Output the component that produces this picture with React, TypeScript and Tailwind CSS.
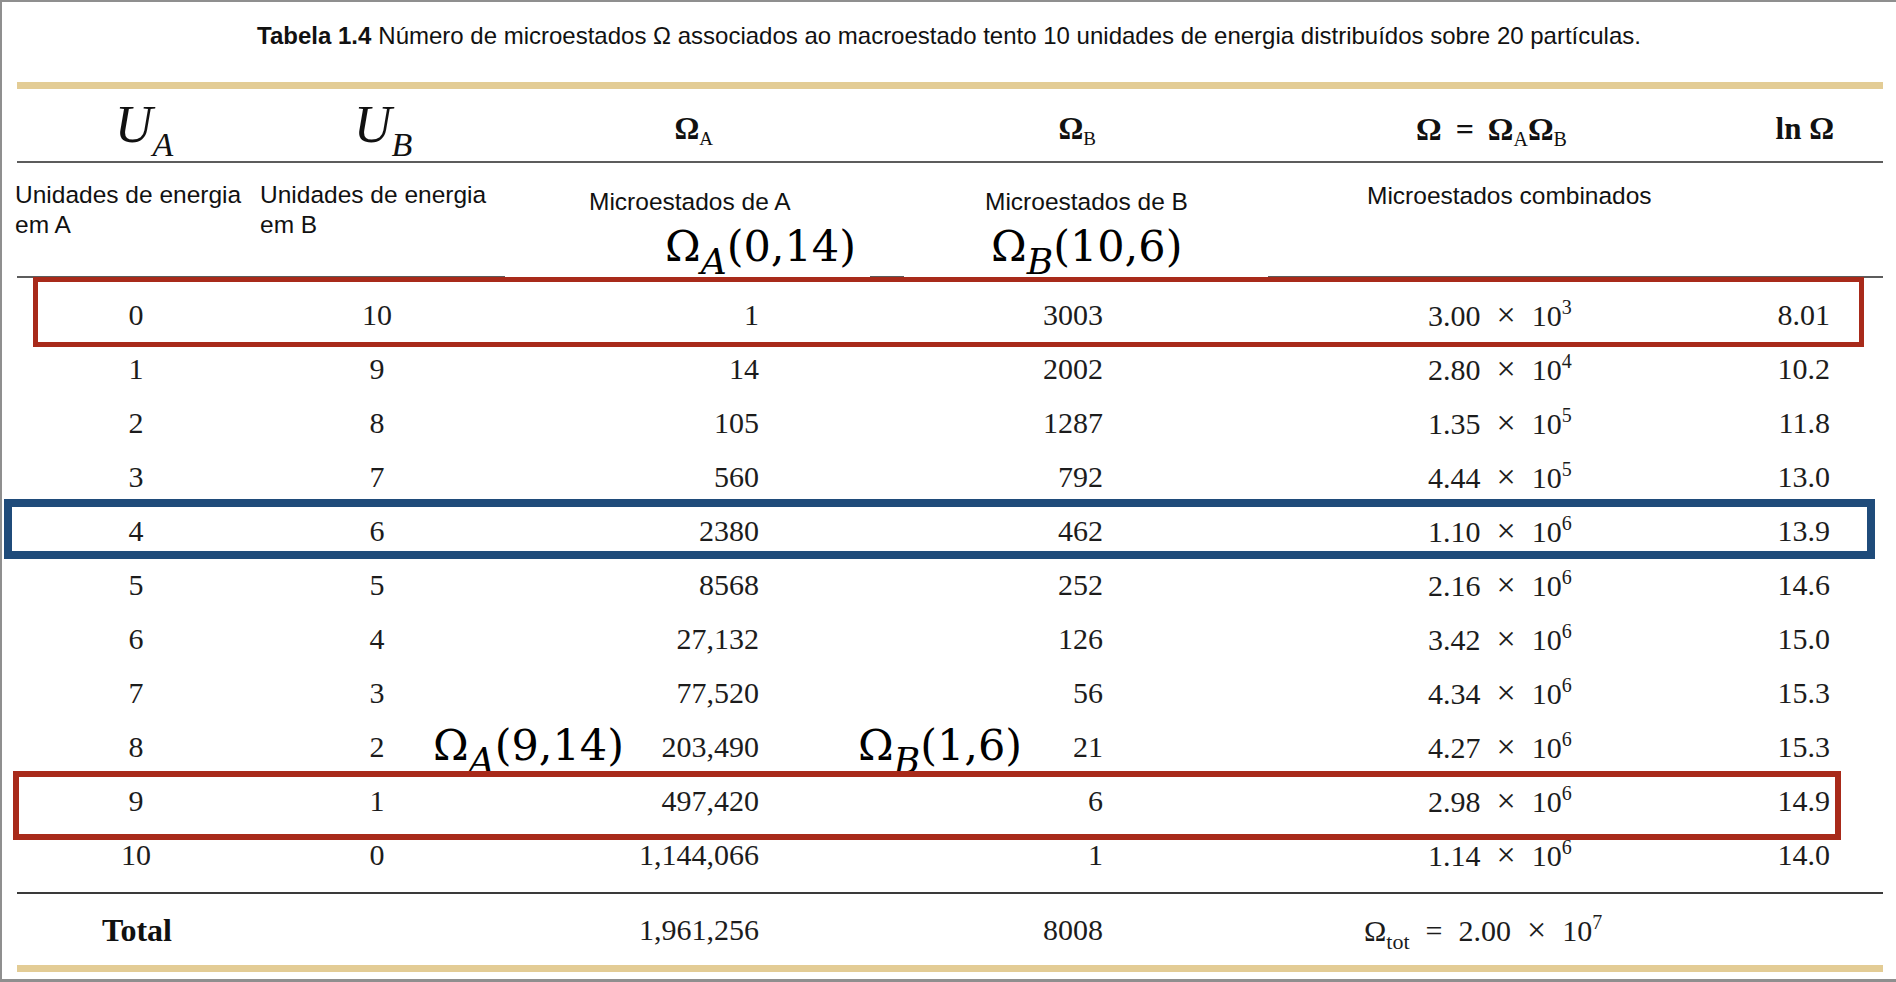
const rows: string[][] = [
  ["0", "10", "1", "3003", "3.00", "3", "8.01"],
  ["1", "9", "14", "2002", "2.80", "4", "10.2"],
  ["2", "8", "105", "1287", "1.35", "5", "11.8"],
  ["3", "7", "560", "792", "4.44", "5", "13.0"],
  ["4", "6", "2380", "462", "1.10", "6", "13.9"],
  ["5", "5", "8568", "252", "2.16", "6", "14.6"],
  ["6", "4", "27,132", "126", "3.42", "6", "15.0"],
  ["7", "3", "77,520", "56", "4.34", "6", "15.3"],
  ["8", "2", "203,490", "21", "4.27", "6", "15.3"],
  ["9", "1", "497,420", "6", "2.98", "6", "14.9"],
  ["10", "0", "1,144,066", "1", "1.14", "6", "14.0"],
];

function Sci({ m, e }: { m: string; e: string }) {
  return (
    <span className="whitespace-nowrap">
      {m}
      <span className="px-[16px] text-[34px]">×</span>
      10
      <span className="relative top-[-12px] text-[20px]">{e}</span>
    </span>
  );
}

function Rule({ dark }: { dark?: boolean }) {
  return <div className={dark ? "h-[2px] bg-[#3a3a3a]" : "h-[2px] bg-[#5c5c5c]"} />;
}

function BigLabel({ sub, args }: { sub: string; args: string }) {
  return (
    <span className="whitespace-nowrap font-['DejaVu_Serif',serif] text-[43px] leading-none text-black">
      Ω
      <span className="relative top-[13px] text-[36px] italic">{sub}</span>
      {args}
    </span>
  );
}

export default function App() {
  return (
    <div className="relative w-[1896px] h-[982px] overflow-hidden bg-white border-t-2 border-l-2 border-b-[3px] border-[#8f8f8f] font-['Liberation_Serif',serif] text-[#1c1c1c]">
      {/* caption */}
      <div className="h-[68px] flex items-center justify-center font-['Liberation_Sans',Arial,sans-serif] text-[24px] text-[#111]">
        <span className="font-bold mr-[7px]">Tabela 1.4</span>
        Número de microestados Ω associados ao macroestado tento 10 unidades de energia distribuídos sobre 20 partículas.
      </div>

      <div className="mt-[12px] ml-[15px] w-[1866px]">
        <div className="h-[7px] bg-[#e3cc95]" />

        {/* symbol header */}
        <div className="h-[72px] flex items-center text-[#111]">
          <div className="w-[238px] pl-[98px] leading-none">
            <span className="italic text-[52px]">U</span>
            <span className="relative top-[14px] italic text-[34px]">A</span>
          </div>
          <div className="w-[244px] pl-[99px] leading-none">
            <span className="italic text-[52px]">U</span>
            <span className="relative top-[14px] italic text-[34px]">B</span>
          </div>
          <div className="w-[260px] pr-[46px] pt-[8px] text-right font-bold text-[31px]">
            Ω<span className="relative top-[6px] text-[19px] font-normal">A</span>
          </div>
          <div className="w-[344px] pr-[7px] pt-[8px] text-right font-bold text-[31px]">
            Ω<span className="relative top-[6px] text-[19px] font-normal">B</span>
          </div>
          <div className="w-[480px] pl-[313px] pt-[8px] font-bold text-[32px] whitespace-nowrap">
            Ω<span className="px-[14px]">=</span>Ω<span className="relative top-[6px] text-[20px] font-normal">A</span>Ω
            <span className="relative top-[6px] text-[20px] font-normal">B</span>
          </div>
          <div className="w-[251px] pt-[8px] text-right font-bold text-[31px]">ln Ω</div>
        </div>

        <Rule />

        {/* description header */}
        <div className="h-[113px] -ml-[2px] flex items-start font-['Liberation_Sans',Arial,sans-serif] text-[24.5px] leading-[30px] text-[#111]">
          <div className="w-[245px] pt-[17px]">
            Unidades de energia
            <br />
            em A
          </div>
          <div className="w-[329px] pt-[17px]">
            Unidades de energia
            <br />
            em B
          </div>
          <div className="w-[396px] pt-[24px]">Microestados de A</div>
          <div className="w-[382px] pt-[24px]">Microestados de B</div>
          <div className="pt-[18px]">Microestados combinados</div>
        </div>

        <Rule />

        <div className="py-[10px] text-[30px] leading-none">
          {rows.map((r) => (
            <div key={r[0]} className="h-[54px] flex items-center">
              <div className="w-[238px] text-center">{r[0]}</div>
              <div className="w-[244px] text-center">{r[1]}</div>
              <div className="w-[260px] text-right">{r[2]}</div>
              <div className="w-[344px] text-right">{r[3]}</div>
              <div className="w-[480px] pl-[325px]">
                <Sci m={r[4]} e={r[5]} />
              </div>
              <div className="w-[247px] text-right">{r[6]}</div>
            </div>
          ))}
        </div>

        <Rule dark />

        <div className="h-[71px] flex items-center text-[30px] leading-none">
          <div className="w-[238px] pl-[85px] font-bold text-[32px] text-[#111]">Total</div>
          <div className="w-[244px]" />
          <div className="w-[260px] text-right">1,961,256</div>
          <div className="w-[344px] text-right">8008</div>
          <div className="pl-[261px] whitespace-nowrap">
            Ω<span className="relative top-[8px] text-[22px]">tot</span>
            <span className="px-[16px]">=</span>
            <Sci m="2.00" e="7" />
          </div>
        </div>

        <div className="h-[7px] bg-[#e3cc95]" />
      </div>

      {/* pasted annotation labels */}
      <div className="absolute left-[503px] top-[216px] w-[365px] h-[64px] bg-white flex items-end justify-end pr-[14px] pb-[14px]">
        <BigLabel sub="A" args="(0,14)" />
      </div>
      <div className="absolute left-[902px] top-[216px] w-[364px] h-[64px] bg-white flex items-end pl-[87px] pb-[14px]">
        <BigLabel sub="B" args="(10,6)" />
      </div>
      <div className="absolute left-[431px] top-[722px]">
        <BigLabel sub="A" args="(9,14)" />
      </div>
      <div className="absolute left-[856px] top-[722px]">
        <BigLabel sub="B" args="(1,6)" />
      </div>

      {/* highlight boxes */}
      <div className="absolute left-[31px] top-[275px] w-[1831px] h-[70px] border-[5px] border-[#a82a1a]" />
      <div className="absolute left-[2px] top-[497px] w-[1871px] h-[60px] border-[8px] border-[#1f4b7a]" />
      <div className="absolute left-[11px] top-[769px] w-[1828px] h-[69px] border-[6px] border-[#a82a1a]" />
    </div>
  );
}
